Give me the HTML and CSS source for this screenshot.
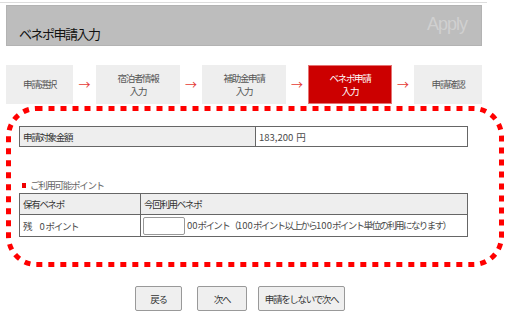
FILE: index.html
```html
<!DOCTYPE html>
<html lang="ja">
<head>
    <meta charset="UTF-8">
    <link rel="stylesheet" href="styles.css">
</head>
<body>
    <div class="top-line"></div>
    <div class="page">
        <div class="page-head">
            <p class="page-title">ベネポ申請入力</p>
            <p class="page-sub">Apply</p>
        </div>

        <div class="steps">
            <div class="step">申請選択</div>
            <div class="step-arrow">→</div>
            <div class="step">宿泊者情報<br>入力</div>
            <div class="step-arrow">→</div>
            <div class="step">補助金申請<br>入力</div>
            <div class="step-arrow">→</div>
            <div class="step step-on">ベネポ申請<br>入力</div>
            <div class="step-arrow">→</div>
            <div class="step">申請確認</div>
        </div>

        <div class="frame">
            <svg class="frame-line" width="498" height="161" viewBox="0 0 498 161">
                <rect x="2.5" y="2.5" width="493" height="156" rx="28" ry="28" fill="none" stroke="#f00" stroke-width="5" stroke-dasharray="6 6"></rect>
            </svg>

            <table class="info">
                <tr>
                    <th class="label-col">申請対象金額</th>
                    <td><span class="num amount">183,200</span>円</td>
                </tr>
            </table>

            <p class="legend"><span class="mark"></span>ご利用可能ポイント</p>

            <table class="info points">
                <tr>
                    <th class="own-col">保有ベネポ</th>
                    <th>今回利用ベネポ</th>
                </tr>
                <tr>
                    <td>残　<span class="num">0</span> ポイント</td>
                    <td class="note"><input type="text" class="point-input"><span class="num">00</span>ポイント（<span class="num">100</span>ポイント以上から<span class="num">100</span>ポイント単位の利用になります）</td>
                </tr>
            </table>
        </div>

        <div class="buttons">
            <button class="btn btn-back">戻る</button>
            <button class="btn btn-next">次へ</button>
            <button class="btn btn-skip">申請をしないで次へ</button>
        </div>
    </div>
</body>
</html>
```

FILE: styles.css
```css
body {
    margin: 0;
    font-family: "Noto Sans CJK JP", "Liberation Sans", sans-serif;
    font-size: 9.5px;
    color: #4a4a4a;
    background-color: #fff;
}

p {
    margin: 0;
}

.top-line {
    width: 487px;
    height: 1px;
    margin-top: 2px;
    background-color: #ddd;
}

.page {
    padding: 0 6px;
}

.page-head {
    width: 474px;
    height: 39px;
    margin-top: 2px;
    background-color: #bdbdbd;
    border: 1px solid #b3b3b3;
    display: flex;
    justify-content: space-between;
    align-items: flex-start;
}

.page-title {
    font-size: 13px;
    letter-spacing: -1.5px;
    color: #111;
    margin: 18px 0 0 12px;
}

.page-sub {
    font-family: "Liberation Sans", sans-serif;
    font-size: 18px;
    letter-spacing: -1px;
    color: #d0d0d0;
    margin: 8px 14px 0 0;
}

.steps {
    display: grid;
    grid-template-columns: 67px 23px 84px 22px 84px 22px 84px 22px 68px;
    height: 39px;
    margin-top: 19px;
}

.step {
    background-color: #eee;
    color: #555;
    letter-spacing: -1.3px;
    line-height: 13px;
    display: flex;
    align-items: center;
    justify-content: center;
    text-align: center;
}

.step-on {
    background-color: #c00;
    color: #fff;
    border: 1px solid #e57373;
}

.step-arrow {
    color: #e53935;
    font-size: 12px;
    display: flex;
    align-items: center;
    justify-content: center;
}

.frame {
    position: relative;
    width: 498px;
    height: 161px;
    margin-top: 2px;
    padding: 20px 0 0 13px;
    box-sizing: border-box;
}

.frame-line {
    position: absolute;
    left: 0;
    top: 0;
}

.info {
    position: relative;
    width: 449px;
    border-collapse: collapse;
    border: 1px solid #666;
    background-color: #fff;
}

.info th,
.info td {
    height: 19px;
    padding: 0 3px;
    text-align: left;
    font-weight: normal;
    letter-spacing: -1.3px;
    border: 1px solid #666;
}

.info th {
    background-color: #eee;
    color: #333;
}

.label-col {
    width: 229px;
}

.num {
    letter-spacing: 0;
}

.amount {
    margin-right: 3px;
}

.info .note {
    letter-spacing: -1.6px;
}

.legend {
    position: relative;
    margin: 32px 0 1px 3px;
    height: 13px;
    line-height: 13px;
    color: #666;
    letter-spacing: -1.3px;
}

.mark {
    display: inline-block;
    width: 4px;
    height: 5px;
    margin-right: 4px;
    background-color: #e00;
    vertical-align: 1px;
}

.points th {
    height: 20px;
}

.points td {
    height: 21px;
}

.own-col {
    width: 114px;
}

.point-input {
    width: 42px;
    height: 18px;
    box-sizing: border-box;
    border: 1px solid #999;
    border-radius: 2px;
    margin: 0 2px 0 -1px;
    padding: 0;
    vertical-align: middle;
}

.buttons {
    display: flex;
    margin: 19px 0 0 129px;
}

.btn {
    height: 25px;
    font-family: "Noto Sans CJK JP", sans-serif;
    font-size: 9.5px;
    letter-spacing: -1.3px;
    color: #333;
    background-color: #efefef;
    border: 1px solid #999;
    border-radius: 2px;
    padding: 0;
}

.btn-back {
    width: 47px;
}

.btn-next {
    width: 50px;
    margin-left: 15px;
}

.btn-skip {
    width: 87px;
    margin-left: 11px;
}
```
